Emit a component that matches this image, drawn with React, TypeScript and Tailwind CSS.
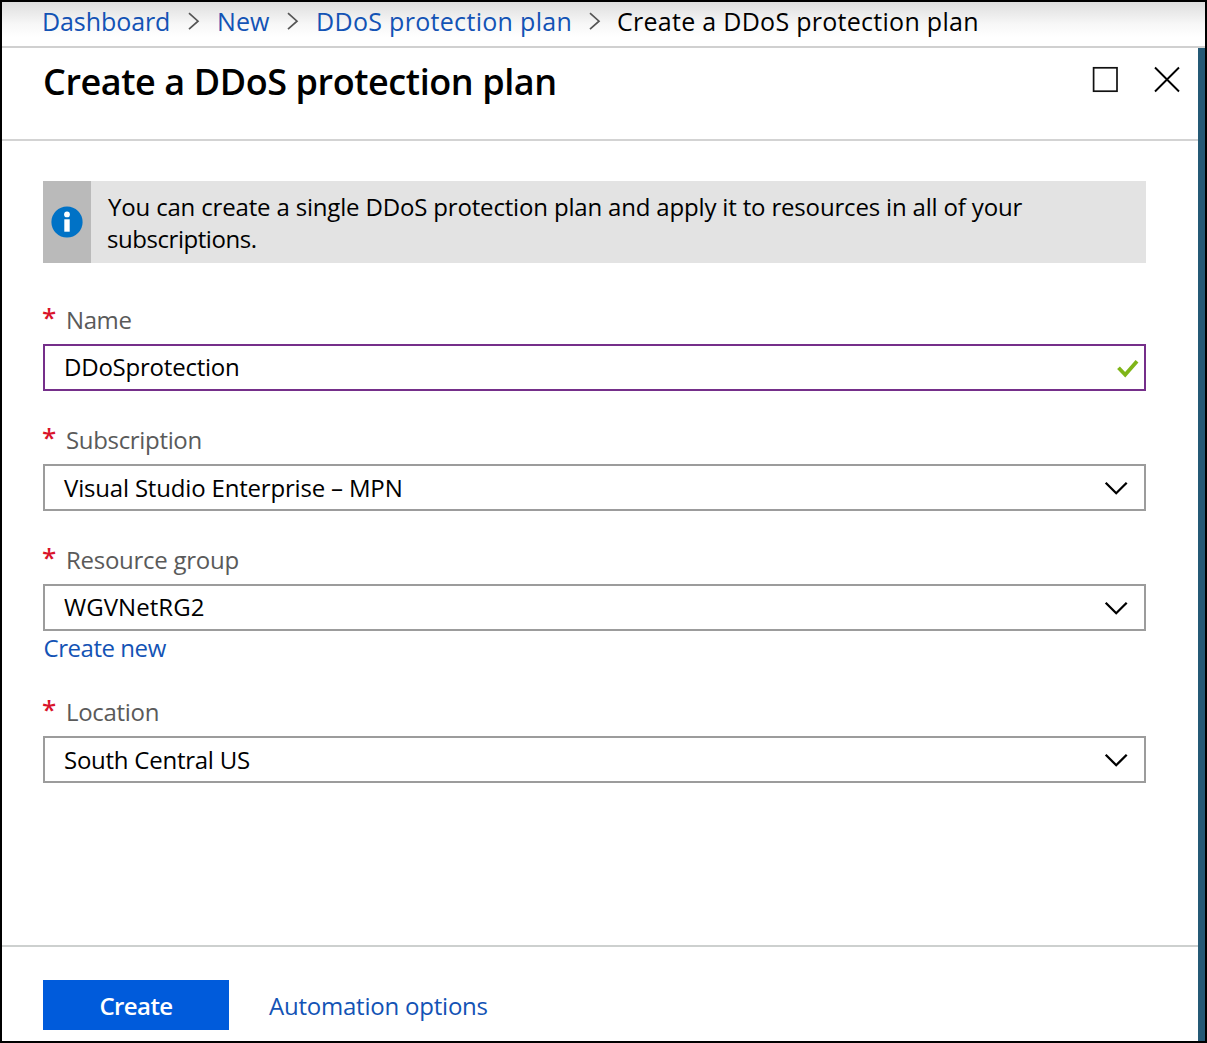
import type { ReactNode } from "react";

function Crumb({ children, className }: { children: ReactNode; className: string }) {
  return <a className={`whitespace-nowrap ${className}`}>{children}</a>;
}

function Separator() {
  return (
    <svg className="h-[18px] w-[12px] shrink-0" viewBox="0 0 12 18" fill="none" stroke="#555" strokeWidth="1.7">
      <path d="M1 1.2 L10 9.2 L1 17.2" />
    </svg>
  );
}

function Chevron() {
  return (
    <svg className="mr-[16px] h-[14px] w-[24px]" viewBox="0 0 24 14" fill="none" stroke="#000" strokeWidth="2.3">
      <path d="M1.7 1.7 L12.2 12.2 L22.7 1.7" />
    </svg>
  );
}

function Check() {
  return (
    <svg className="mt-[2px] mr-[5px] h-[18px] w-[22px]" viewBox="0 0 22 18" fill="none" stroke="#7fb518" strokeWidth="3.8">
      <path d="M1.5 7.8 L8.2 14.8 L20 1.3" />
    </svg>
  );
}

function Field({
  label,
  labelClass,
  value,
  valueClass,
  valid = false,
}: {
  label: string;
  labelClass: string;
  value: string;
  valueClass: string;
  valid?: boolean;
}) {
  return (
    <div>
      <div className="flex h-8 items-center">
        <span className="-ml-px w-[24px] pb-[6px] font-['Noto_Sans'] text-[26px] leading-6 font-medium text-[#d9142a]">*</span>
        <span className={`text-[#5a5a5a] ${labelClass}`}>{label}</span>
      </div>
      <div
        className={`mt-[8px] flex h-[47px] items-center justify-between border-2 pl-[19px] ${
          valid ? "border-[#752f8a]" : "border-[#9c9c9c]"
        }`}
      >
        <span className={valueClass}>{value}</span>
        {valid ? <Check /> : <Chevron />}
      </div>
    </div>
  );
}

export default function App() {
  return (
    <div className="flex h-[1043px] w-[1207px] flex-col overflow-hidden border-2 border-black bg-white font-['Open_Sans',sans-serif] text-[24px] leading-8 text-black">
      <nav className="flex h-[46px] shrink-0 items-center border-b-2 border-[#d0d0d0] bg-linear-to-b from-[#dedede] via-[#f7f7f7] via-50% to-white to-80% pb-[7px] pl-[40px] text-[25px] text-[#1353b5]">
        <Crumb className="w-[146px] tracking-[-0.08px]">Dashboard</Crumb>
        <Separator />
        <Crumb className="ml-[17px] w-[70px] tracking-[0.1px]">New</Crumb>
        <Separator />
        <Crumb className="ml-[17px] w-[273px] tracking-[0.31px]">DDoS protection plan</Crumb>
        <Separator />
        <Crumb className="ml-[16px] tracking-[0.28px] text-black">Create a DDoS protection plan</Crumb>
      </nav>

      <div className="flex min-h-0 flex-1">
        <main className="flex flex-1 flex-col">
          <header className="flex h-[93px] shrink-0 justify-between border-b-2 border-[#d3d3d3] pl-[41px]">
            <h1 className="mt-[10px] text-[36px] leading-[48px] font-semibold tracking-[-0.42px] whitespace-nowrap">
              Create a DDoS protection plan
            </h1>
            <div className="mt-[18px] mr-[18px] flex h-[27px] gap-[35px]">
              <svg className="size-[27px]" viewBox="0 0 27 27" fill="none" stroke="#111" strokeWidth="1.7">
                <rect x="2.6" y="1.8" width="23.4" height="23.4" />
              </svg>
              <svg className="size-[27px]" viewBox="0 0 27 27" fill="none" stroke="#000" strokeWidth="1.9">
                <path d="M2 1.5 L26 25.5 M26 1.5 L2 25.5" />
              </svg>
            </div>
          </header>

          <section className="flex flex-1 flex-col pt-[40px] pr-[52px] pl-[41px]">
            <div className="flex h-[82px] bg-[#e3e3e3]">
              <div className="flex w-[48px] items-center justify-center bg-[#bababa]">
                <svg className="size-[32px]" viewBox="0 0 32 32">
                  <circle cx="16" cy="16" r="15.6" fill="#0072c6" />
                  <circle cx="16" cy="8.4" r="2.9" fill="#fff" />
                  <rect x="13.3" y="13.3" width="5.4" height="12.4" fill="#fff" />
                </svg>
              </div>
              <p className="pt-[10px] pl-[17px] leading-8">
                <span className="block tracking-[-0.17px]">
                  You can create a single DDoS protection plan and apply it to resources in all of your
                </span>
                <span className="-ml-px block tracking-[-0.45px]">subscriptions.</span>
              </p>
            </div>

            <div className="mt-[41px]">
              <Field label="Name" labelClass="tracking-[-0.4px]" value="DDoSprotection" valueClass="-mt-[2px] tracking-[-0.22px]" valid />
            </div>
            <div className="mt-[33px]">
              <Field label="Subscription" labelClass="tracking-[-0.33px]" value="Visual Studio Enterprise – MPN" valueClass="tracking-[-0.18px]" />
            </div>
            <div className="mt-[33px]">
              <Field label="Resource group" labelClass="tracking-[-0.27px]" value="WGVNetRG2" valueClass="-mt-px tracking-[0.05px]" />
            </div>
            <a className="mt-px pl-[0.5px] tracking-[-0.45px] text-[#1353b5]">Create new</a>
            <div className="mt-[32px]">
              <Field label="Location" labelClass="tracking-[-0.3px]" value="South Central US" valueClass="tracking-[-0.25px]" />
            </div>
          </section>

          <footer className="flex h-[96px] shrink-0 items-start border-t-2 border-[#cdd0cf] pt-[33px] pl-[41px]">
            <button className="h-[50px] w-[186px] bg-[#005bdb] pt-[2px] font-semibold tracking-[-0.6px] text-white">Create</button>
            <a className="mt-[10px] ml-[40px] tracking-[-0.22px] text-[#1353b5]">Automation options</a>
          </footer>
        </main>
        <div className="w-[7px] bg-[#245975]" />
      </div>
    </div>
  );
}
